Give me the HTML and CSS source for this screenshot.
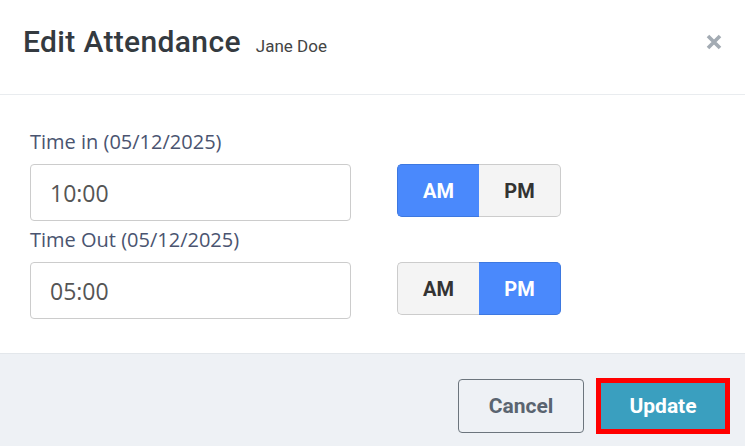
FILE: index.html
```html
<!DOCTYPE html>
<html lang="en">
<head>
  <meta charset="UTF-8" />
  <meta name="viewport" content="width=device-width, initial-scale=1.0"/>
  <title>Edit Attendance</title>
  <link rel="stylesheet" href="styles.css">
</head>
<body>
  <div class="modal">
    <div class="modal-header">
      <div class="title-group">
        <h2 class="modal-title">Edit Attendance</h2>
        <span class="modal-sub">Jane Doe</span>
      </div>
      <button class="close" aria-label="Close">
        <svg width="16" height="16" viewBox="0 0 16 16">
          <path d="M2 2 L14 14 M14 2 L2 14" stroke="#a3abb3" stroke-width="3.6" stroke-linecap="butt"/>
        </svg>
      </button>
    </div>

    <div class="modal-body">
      <label class="field-label" for="time-in">Time in (05/12/2025)</label>
      <div class="field-row">
        <input class="time-input" id="time-in" type="text" value="10:00">
        <div class="toggle">
          <button class="toggle-btn active">AM</button>
          <button class="toggle-btn">PM</button>
        </div>
      </div>

      <label class="field-label" for="time-out">Time Out (05/12/2025)</label>
      <div class="field-row">
        <input class="time-input" id="time-out" type="text" value="05:00">
        <div class="toggle">
          <button class="toggle-btn">AM</button>
          <button class="toggle-btn active">PM</button>
        </div>
      </div>
    </div>

    <div class="modal-footer">
      <button class="btn btn-cancel">Cancel</button>
      <button class="btn btn-update">Update</button>
    </div>
  </div>
</body>
</html>
```

FILE: styles.css
```css
body {
  margin: 0;
  background-color: #fff;
  font-family: Roboto, "Liberation Sans", sans-serif;
}

.modal {
  width: 745px;
  height: 446px;
  display: flex;
  flex-direction: column;
}

.modal-header {
  box-sizing: border-box;
  height: 95px;
  border-bottom: 1px solid #e9ecef;
  display: flex;
  align-items: center;
  padding: 0 23px 12px;
}

.title-group {
  display: flex;
  align-items: baseline;
}

.modal-title {
  margin: 0;
  font-size: 30px;
  font-weight: 500;
  letter-spacing: 0.35px;
  color: #343a40;
}

.modal-sub {
  margin-left: 15px;
  font-size: 17px;
  color: #444;
}

.close {
  margin-left: auto;
  border: none;
  background: none;
  padding: 0;
  width: 16px;
  height: 16px;
  position: relative;
  top: 1px;
}

.modal-body {
  padding: 34px 30px 0;
  flex: 1;
}

.field-label {
  display: block;
  font-family: "Open Sans", sans-serif;
  font-size: 20px;
  font-weight: 500;
  line-height: 26px;
  color: #4a5470;
  margin-bottom: 9px;
}

.field-row {
  display: flex;
  align-items: flex-start;
  gap: 46px;
  margin-bottom: 6px;
}

.time-input {
  box-sizing: border-box;
  width: 321px;
  height: 57px;
  border: 1px solid #ccc;
  border-radius: 4px;
  padding: 0 19px;
  font-family: "Open Sans", sans-serif;
  font-size: 23px;
  color: #555;
}

.toggle {
  display: flex;
  height: 53px;
}

.toggle-btn {
  box-sizing: border-box;
  width: 82px;
  height: 53px;
  border: 1px solid #ccc;
  background-color: #f4f4f4;
  font-family: Roboto, sans-serif;
  font-size: 20px;
  font-weight: 700;
  color: #333;
}

.toggle-btn:first-child {
  border-radius: 5px 0 0 5px;
  border-right: none;
}

.toggle-btn:last-child {
  border-radius: 0 5px 5px 0;
  border-left: none;
}

.toggle-btn.active {
  background-color: #4a89fc;
  border-color: #3d78e0;
  color: #fff;
}

.modal-footer {
  box-sizing: border-box;
  height: 93px;
  background-color: #eef1f5;
  border-top: 1px solid #e3e7eb;
  display: flex;
  align-items: center;
  justify-content: flex-end;
  gap: 12px;
  padding: 11px 15px 0 0;
}

.btn {
  font-family: Roboto, sans-serif;
  font-size: 21px;
  font-weight: 700;
  box-sizing: border-box;
}

.btn-cancel {
  width: 126px;
  height: 54px;
  border: 1px solid #6c757d;
  border-radius: 4px;
  background: none;
  color: #5a6470;
}

.btn-update {
  width: 134px;
  height: 56px;
  border: 5px solid #ff0000;
  background-color: #3a9fbf;
  color: #fff;
}
```
